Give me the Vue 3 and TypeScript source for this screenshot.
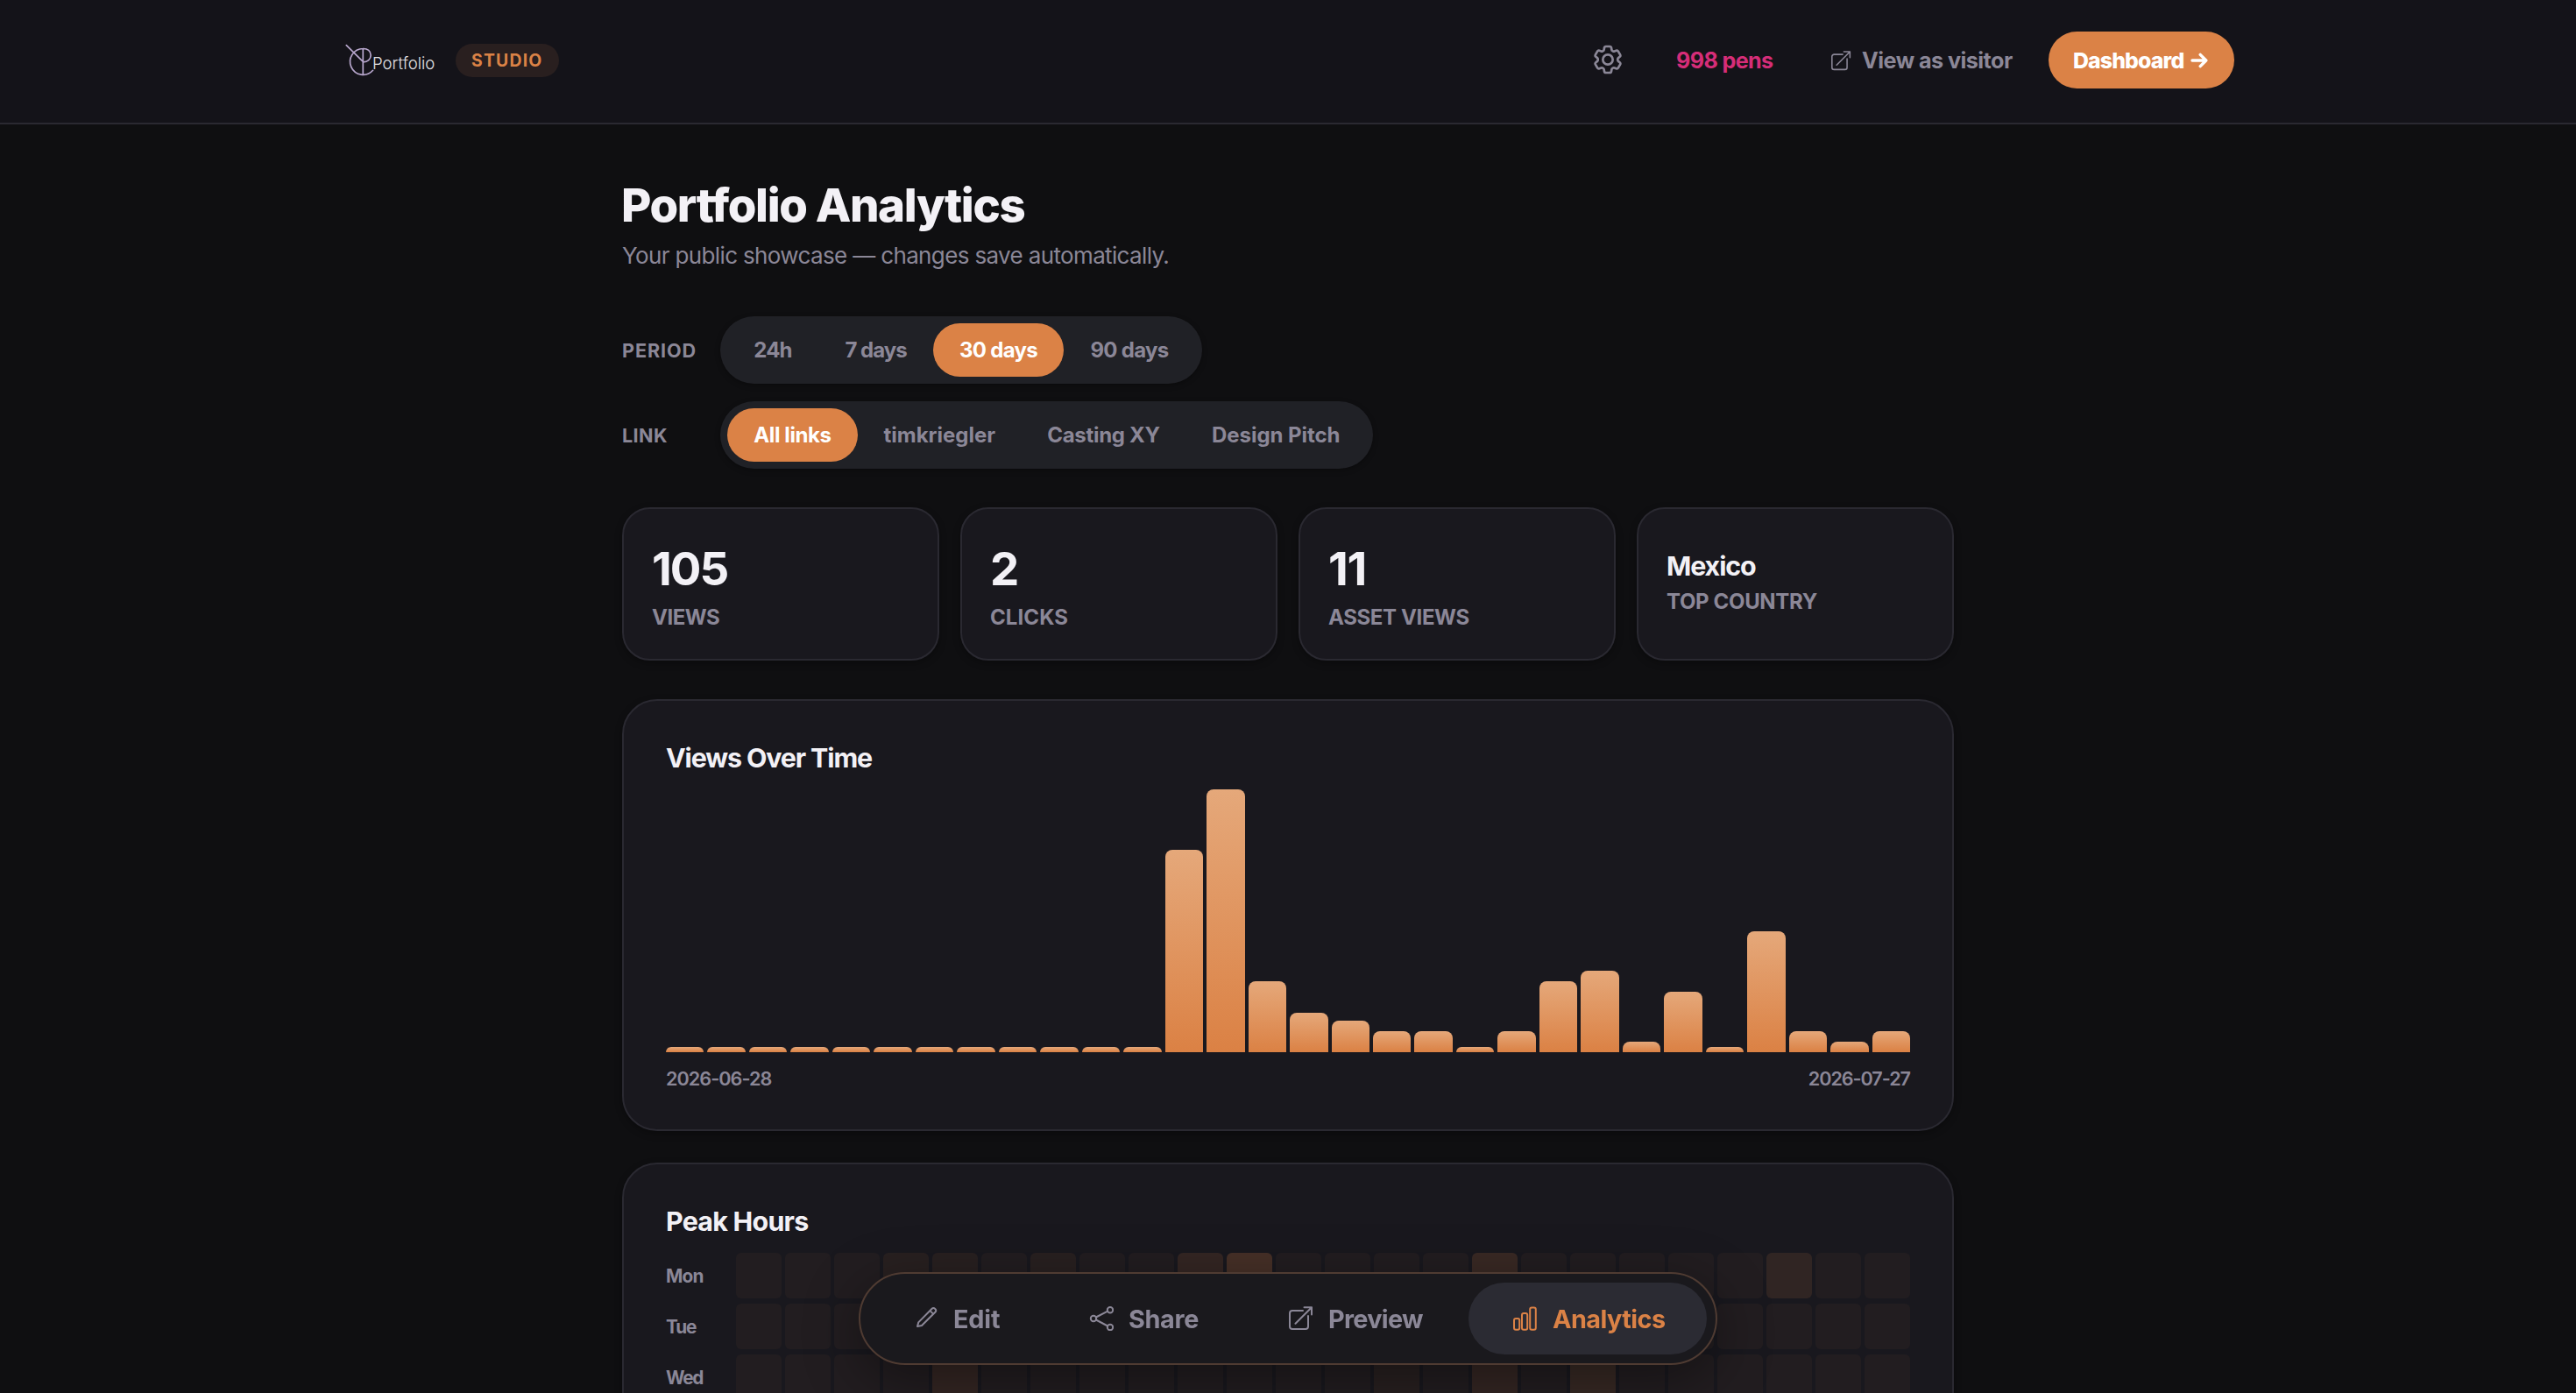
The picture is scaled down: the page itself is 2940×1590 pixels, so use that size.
<script setup lang="ts">
interface Option {
  label: string
  width: number
  spacing: number
  active?: boolean
}

interface Stat {
  value: string
  label: string
  spacing: number
  labelSpacing: number
  compact?: boolean
}

interface HeatRow {
  day: string
  spacing: number
  cells: number[]
}

const periods: Option[] = [
  { label: '24h', width: 104, spacing: -0.8 },
  { label: '7 days', width: 131, spacing: -1 },
  { label: '30 days', width: 149, spacing: -0.7, active: true },
  { label: '90 days', width: 150, spacing: -0.7 },
]

const links: Option[] = [
  { label: 'All links', width: 149, spacing: -0.4, active: true },
  { label: 'timkriegler', width: 186.5, spacing: 0 },
  { label: 'Casting XY', width: 188, spacing: -0.3 },
  { label: 'Design Pitch', width: 205.5, spacing: -0.05 },
]

const stats: Stat[] = [
  { value: '105', label: 'Views', spacing: -1.9, labelSpacing: -0.5 },
  { value: '2', label: 'Clicks', spacing: -1, labelSpacing: 0.1 },
  { value: '11', label: 'Asset Views', spacing: -1.2, labelSpacing: -0.38 },
  { value: 'Mexico', label: 'Top Country', spacing: -1.1, labelSpacing: -0.35, compact: true },
]

// Daily share of the busiest day, in percent
const days: number[] = [
  0, 0, 0, 0, 0, 0, 0, 0, 0, 0, 0, 0, 77, 100, 27, 15, 12, 8, 8, 2, 8, 27, 31, 4, 23, 2, 46, 8, 4, 8,
]
const barHeight = (share: number): string => `${Math.max(share, 2)}%`

const IDLE = 0.05
const heatRow = (day: string, spacing: number, peaks: Record<number, number> = {}): HeatRow => ({
  day,
  spacing,
  cells: Array.from({ length: 24 }, (_, hour) => peaks[hour] ?? IDLE),
})

const heat: HeatRow[] = [
  heatRow('Mon', -0.8, { 3: 0.08, 4: 0.08, 6: 0.08, 9: 0.14, 10: 0.23, 15: 0.17, 21: 0.12 }),
  heatRow('Tue', -1.1),
  heatRow('Wed', -1.4, { 4: 0.14, 13: 0.08, 15: 0.14, 17: 0.16 }),
]
</script>

<template>
  <div class="page">
    <header class="topbar">
      <div class="topbar-inner">
        <div class="brand">
          <svg class="brand-mark" viewBox="0 0 34 38" width="34" height="38" fill="none">
            <path d="M1.3 1.7 20.3 20.4M20.3 5.5V35.3M31.6 30.3A14.9 14.9 0 1 1 20.3 5.5C25.5 5.2 29.2 8.6 29.2 12.9C29.2 17.5 25.6 20.8 20.6 20.8" />
          </svg>
          <span class="brand-name">Portfolio</span>
        </div>
        <span class="badge">STUDIO</span>
        <div class="spacer"></div>
        <svg class="gear" viewBox="0 0 24 24" width="40" height="40" fill="none">
          <path d="M9.594 3.94c.09-.542.56-.94 1.11-.94h2.593c.55 0 1.02.398 1.11.94l.213 1.281c.063.374.313.686.645.87.074.04.147.083.22.127.325.196.72.257 1.075.124l1.217-.456a1.125 1.125 0 0 1 1.37.49l1.296 2.247a1.125 1.125 0 0 1-.26 1.431l-1.003.827c-.293.241-.438.613-.43.992a7.723 7.723 0 0 1 0 .255c-.008.378.137.75.43.991l1.004.827c.424.35.534.955.26 1.43l-1.298 2.247a1.125 1.125 0 0 1-1.369.491l-1.217-.456c-.355-.133-.75-.072-1.076.124a6.47 6.47 0 0 1-.22.128c-.331.183-.581.495-.644.869l-.213 1.281c-.09.543-.56.94-1.11.94h-2.594c-.55 0-1.019-.398-1.11-.94l-.213-1.281c-.062-.374-.312-.686-.644-.87a6.52 6.52 0 0 1-.22-.127c-.325-.196-.72-.257-1.076-.124l-1.217.456a1.125 1.125 0 0 1-1.369-.49l-1.297-2.247a1.125 1.125 0 0 1 .26-1.431l1.004-.827c.292-.24.437-.613.43-.991a6.932 6.932 0 0 1 0-.255c.007-.38-.138-.751-.43-.992l-1.004-.827a1.125 1.125 0 0 1-.26-1.43l1.297-2.247a1.125 1.125 0 0 1 1.37-.491l1.216.456c.356.133.751.072 1.076-.124.072-.044.146-.086.22-.128.332-.183.582-.495.644-.869l.214-1.28Z" />
          <circle cx="12" cy="12" r="3.4" />
        </svg>
        <span class="pens">998 pens</span>
        <a class="visitor">
          <svg viewBox="0 0 28 28" width="23" height="23" fill="none">
            <path d="M16 5H4a3 3 0 0 0-3 3v15a3 3 0 0 0 3 3h15a3 3 0 0 0 3-3V11M17.5 1.2H26V9.5M26 1.2 7.5 19.8" />
          </svg>
          <span>View as visitor</span>
        </a>
        <a class="dashboard">
          <span>Dashboard</span>
          <svg viewBox="0 0 20 20" width="20" height="20" fill="none">
            <path d="M2 10H17.6M11.2 3.4 17.8 10 11.2 16.6" />
          </svg>
        </a>
      </div>
    </header>

    <main class="main">
      <h1 class="title">Portfolio Analytics</h1>
      <p class="subtitle">Your public showcase — changes save automatically.</p>

      <div class="filters">
        <div class="filter">
          <span class="filter-label">PERIOD</span>
          <div class="segmented">
            <button
              v-for="o in periods"
              :key="o.label"
              class="segment"
              :class="{ active: o.active }"
              :style="{ width: o.width + 'px', letterSpacing: o.spacing + 'px' }"
            >{{ o.label }}</button>
          </div>
        </div>
        <div class="filter">
          <span class="filter-label link">LINK</span>
          <div class="segmented">
            <button
              v-for="o in links"
              :key="o.label"
              class="segment"
              :class="{ active: o.active }"
              :style="{ width: o.width + 'px', letterSpacing: o.spacing + 'px' }"
            >{{ o.label }}</button>
          </div>
        </div>
      </div>

      <section class="stats">
        <article v-for="s in stats" :key="s.label" class="stat" :class="{ compact: s.compact }">
          <div class="stat-value" :style="{ letterSpacing: s.spacing + 'px' }">{{ s.value }}</div>
          <div class="stat-label" :style="{ letterSpacing: s.labelSpacing + 'px' }">{{ s.label }}</div>
        </article>
      </section>

      <section class="card views">
        <h2 class="card-title">Views Over Time</h2>
        <div class="chart">
          <div v-for="(d, i) in days" :key="i" class="bar" :style="{ height: barHeight(d) }"></div>
        </div>
        <div class="axis">
          <span>2026-06-28</span>
          <span class="end">2026-07-27</span>
        </div>
      </section>

      <section class="card peak">
        <h2 class="card-title hours">Peak Hours</h2>
        <div class="heat">
          <div v-for="r in heat" :key="r.day" class="heat-row">
            <span class="heat-day" :style="{ letterSpacing: r.spacing + 'px' }">{{ r.day }}</span>
            <div
              v-for="(c, h) in r.cells"
              :key="h"
              class="heat-cell"
              :style="{ backgroundColor: `rgba(219, 130, 70, ${c})` }"
            ></div>
          </div>
        </div>
      </section>
    </main>

    <nav class="dock">
      <a class="dock-item edit">
        <svg viewBox="0 0 28 28" width="28" height="28" fill="none">
          <path d="M4 23 5.2 18.4 20.4 3A2.7 2.7 0 0 1 24.3 6.8L9 22 4 23ZM19 5.6 21.8 8.4" />
        </svg>
        <span>Edit</span>
      </a>
      <a class="dock-item share">
        <svg viewBox="0 0 28 28" width="28" height="28" fill="none">
          <circle cx="5" cy="14" r="3.2" />
          <circle cx="24" cy="4.2" r="3.2" />
          <circle cx="24" cy="24" r="3.2" />
          <path d="M7.9 12.5 21.2 5.7M7.9 15.5 21.2 22.5" />
        </svg>
        <span>Share</span>
      </a>
      <a class="dock-item preview">
        <svg viewBox="0 0 28 28" width="28" height="28" fill="none">
          <path d="M16 5H4a3 3 0 0 0-3 3v15a3 3 0 0 0 3 3h15a3 3 0 0 0 3-3V11M17.5 1.2H26V9.5M26 1.2 7.5 19.8" />
        </svg>
        <span>Preview</span>
      </a>
      <a class="dock-item analytics">
        <svg viewBox="0 0 28 28" width="28" height="28" fill="none">
          <rect x="1" y="14" width="6.2" height="12.8" rx="2" />
          <rect x="10" y="8" width="6.2" height="18.8" rx="2" />
          <rect x="19.2" y="1.4" width="6.6" height="25.4" rx="2" />
        </svg>
        <span>Analytics</span>
      </a>
    </nav>
  </div>
</template>

<style>
html,
body {
  margin: 0;
  background: #0f0f11;
  overflow: hidden;
}
</style>

<style scoped>
.page {
  height: 1590px;
  overflow: hidden;
  background: #0f0f11;
  color: #f3f1f6;
  font-family: Inter, "Noto Sans", sans-serif;
  white-space: nowrap;
}

.page *,
.page {
  box-sizing: border-box;
}

.topbar {
  height: 142px;
  background: #141319;
  border-bottom: 2px solid #2a2931;
}

.topbar-inner {
  display: flex;
  align-items: center;
  width: 2160px;
  height: 137px;
  margin: 0 auto;
}

.brand {
  display: flex;
  align-items: flex-end;
  width: 126px;
  padding-left: 4px;
  height: 38px;
}

.brand-mark {
  flex: none;
  stroke: #b7a6cc;
  stroke-width: 1.7;
  stroke-linecap: round;
}

.brand-name {
  margin-left: -4px;
  padding-left: 1px;
  font-size: 18.6px;
  line-height: 31px;
  font-weight: 300;
  letter-spacing: 0;
  color: #e2e1e4;
}

.badge {
  width: 118px;
  height: 38px;
  margin-left: 4px;
  padding-left: 18px;
  border-radius: 19px;
  background: #291f1f;
  color: #db8246;
  font-size: 19.4px;
  line-height: 38px;
  font-weight: 700;
  letter-spacing: 1.2px;
}

.spacer {
  flex: 1;
}

.gear {
  flex: none;
  margin-top: -1px;
  stroke: #8b8797;
  stroke-width: 1.6;
}

.pens {
  width: 111px;
  margin-left: 58px;
  margin-top: 1px;
  color: #d62d78;
  font-size: 25.2px;
  line-height: 30px;
  font-weight: 700;
  letter-spacing: -0.65px;
}

.visitor {
  display: flex;
  align-items: center;
  width: 208px;
  margin-left: 66px;
  margin-top: 1px;
  color: #8b8797;
  font-size: 25.2px;
  line-height: 30px;
  font-weight: 700;
  letter-spacing: -0.55px;
}

.visitor svg {
  flex: none;
  margin-right: 12px;
  stroke: currentColor;
  stroke-width: 1.9;
  stroke-linecap: round;
  stroke-linejoin: round;
}

.dashboard {
  display: flex;
  align-items: center;
  width: 212px;
  height: 65px;
  margin-left: 40px;
  padding-left: 28px;
  border-radius: 33px;
  background: #db8246;
  color: #fff;
  font-size: 24.8px;
  font-weight: 800;
  letter-spacing: -0.85px;
}

.dashboard span {
  width: 134px;
}

.dashboard svg {
  stroke: #fff;
  stroke-width: 3.4;
  stroke-linecap: round;
  stroke-linejoin: round;
}

.main {
  width: 1520px;
  margin: 0 auto;
  padding-top: 62px;
}

.title {
  margin: 0 0 8px -1px;
  font-size: 52.8px;
  line-height: 60px;
  font-weight: 800;
  letter-spacing: -1.4px;
}

.subtitle {
  margin: 0;
  color: #8b8797;
  font-size: 26px;
  line-height: 40px;
  font-weight: 400;
  letter-spacing: -0.64px;
}

.filters {
  display: flex;
  flex-direction: column;
  gap: 20px;
  margin-top: 49px;
}

.filter {
  display: flex;
  align-items: center;
}

.filter-label {
  width: 112px;
  padding-top: 1px;
  color: #8b8797;
  font-size: 21.6px;
  line-height: 28px;
  font-weight: 700;
  letter-spacing: 0.9px;
}

.filter-label.link {
  letter-spacing: 0.4px;
}

.segmented {
  display: flex;
  height: 77px;
  padding: 8px;
  border-radius: 39px;
  background: #202126;
  box-shadow: 0 2px 6px rgba(0, 0, 0, 0.3);
}

.segment {
  height: 61px;
  padding: 0;
  border: 0;
  border-radius: 31px;
  background: transparent;
  color: #8b8797;
  font-family: inherit;
  font-size: 24px;
  line-height: 62px;
  font-weight: 700;
  text-align: center;
}

.segment.active {
  background: #db8246;
  color: #fff;
}

.stats {
  display: grid;
  grid-template-columns: repeat(4, 1fr);
  gap: 24px;
  margin-top: 44px;
}

.stat {
  height: 175px;
  padding: 40px 32px 0;
  border: 2px solid #2a2931;
  border-radius: 32px;
  background: #19181e;
  box-shadow: 0 3px 8px rgba(0, 0, 0, 0.3);
}

.stat-value {
  font-size: 52.8px;
  line-height: 56px;
  font-weight: 700;
}

.stat-label {
  margin-top: 13px;
  color: #8b8797;
  font-size: 24px;
  line-height: 30px;
  font-weight: 650;
  text-transform: uppercase;
}

.stat.compact {
  padding-top: 45px;
}

.stat.compact .stat-value {
  font-size: 30.4px;
  line-height: 40px;
}

.stat.compact .stat-label {
  margin-top: 6px;
}

.card {
  padding: 45px 48px 0;
  border: 2px solid #2a2931;
  border-radius: 40px;
  background: #19181e;
  box-shadow: 0 3px 8px rgba(0, 0, 0, 0.3);
}

.card-title {
  margin: 0;
  font-size: 30.4px;
  line-height: 40px;
  font-weight: 700;
  letter-spacing: -1.12px;
}

.card-title.hours {
  letter-spacing: -0.75px;
}

.views {
  height: 493px;
  margin-top: 44px;
}

.chart {
  display: flex;
  align-items: flex-end;
  gap: 4px;
  height: 300px;
  margin-top: 16px;
}

.bar {
  flex: 1;
  border-radius: 8px 8px 0 0;
  background: linear-gradient(180deg, #e5a87a, #db8144);
}

.axis {
  display: flex;
  justify-content: space-between;
  margin-top: 15px;
  color: #8b8797;
  font-size: 21.6px;
  line-height: 30px;
  font-weight: 600;
  letter-spacing: -0.95px;
}

.axis .end {
  letter-spacing: -1.05px;
}

.peak {
  height: 600px;
  margin-top: 36px;
}

.heat {
  display: flex;
  flex-direction: column;
  gap: 6px;
  margin-top: 16px;
}

.heat-row {
  display: grid;
  grid-template-columns: 76px repeat(24, 1fr);
  gap: 4px;
  align-items: center;
  height: 52px;
}

.heat-day {
  padding-top: 2px;
  color: #8b8797;
  font-size: 20.8px;
  line-height: 28px;
  font-weight: 700;
}

.heat-cell {
  height: 52px;
  border-radius: 6px;
}

.dock {
  position: fixed;
  left: 980px;
  top: 1452px;
  display: flex;
  width: 980px;
  height: 106px;
  padding: 10px;
  border: 2px solid #4f3b32;
  border-radius: 53px;
  background: #1a191d;
  box-shadow: 0 16px 64px rgba(0, 0, 0, 0.4);
}

.dock-item {
  display: flex;
  align-items: center;
  height: 82px;
  padding-left: 51px;
  border-radius: 41px;
  color: #8b8797;
  font-size: 28.8px;
  line-height: 40px;
  font-weight: 700;
}

.dock-item span {
  padding-top: 1px;
}

.dock-item svg {
  flex: none;
  margin-right: 17px;
  stroke: currentColor;
  stroke-width: 2;
  stroke-linecap: round;
  stroke-linejoin: round;
}

.edit {
  width: 200px;
  letter-spacing: -0.15px;
}

.share {
  width: 228px;
  letter-spacing: -0.35px;
}

.preview {
  width: 256px;
  letter-spacing: -0.7px;
}

.analytics {
  width: 272px;
  background: #2b2b33;
  color: #db8246;
  letter-spacing: -0.55px;
}
</style>
